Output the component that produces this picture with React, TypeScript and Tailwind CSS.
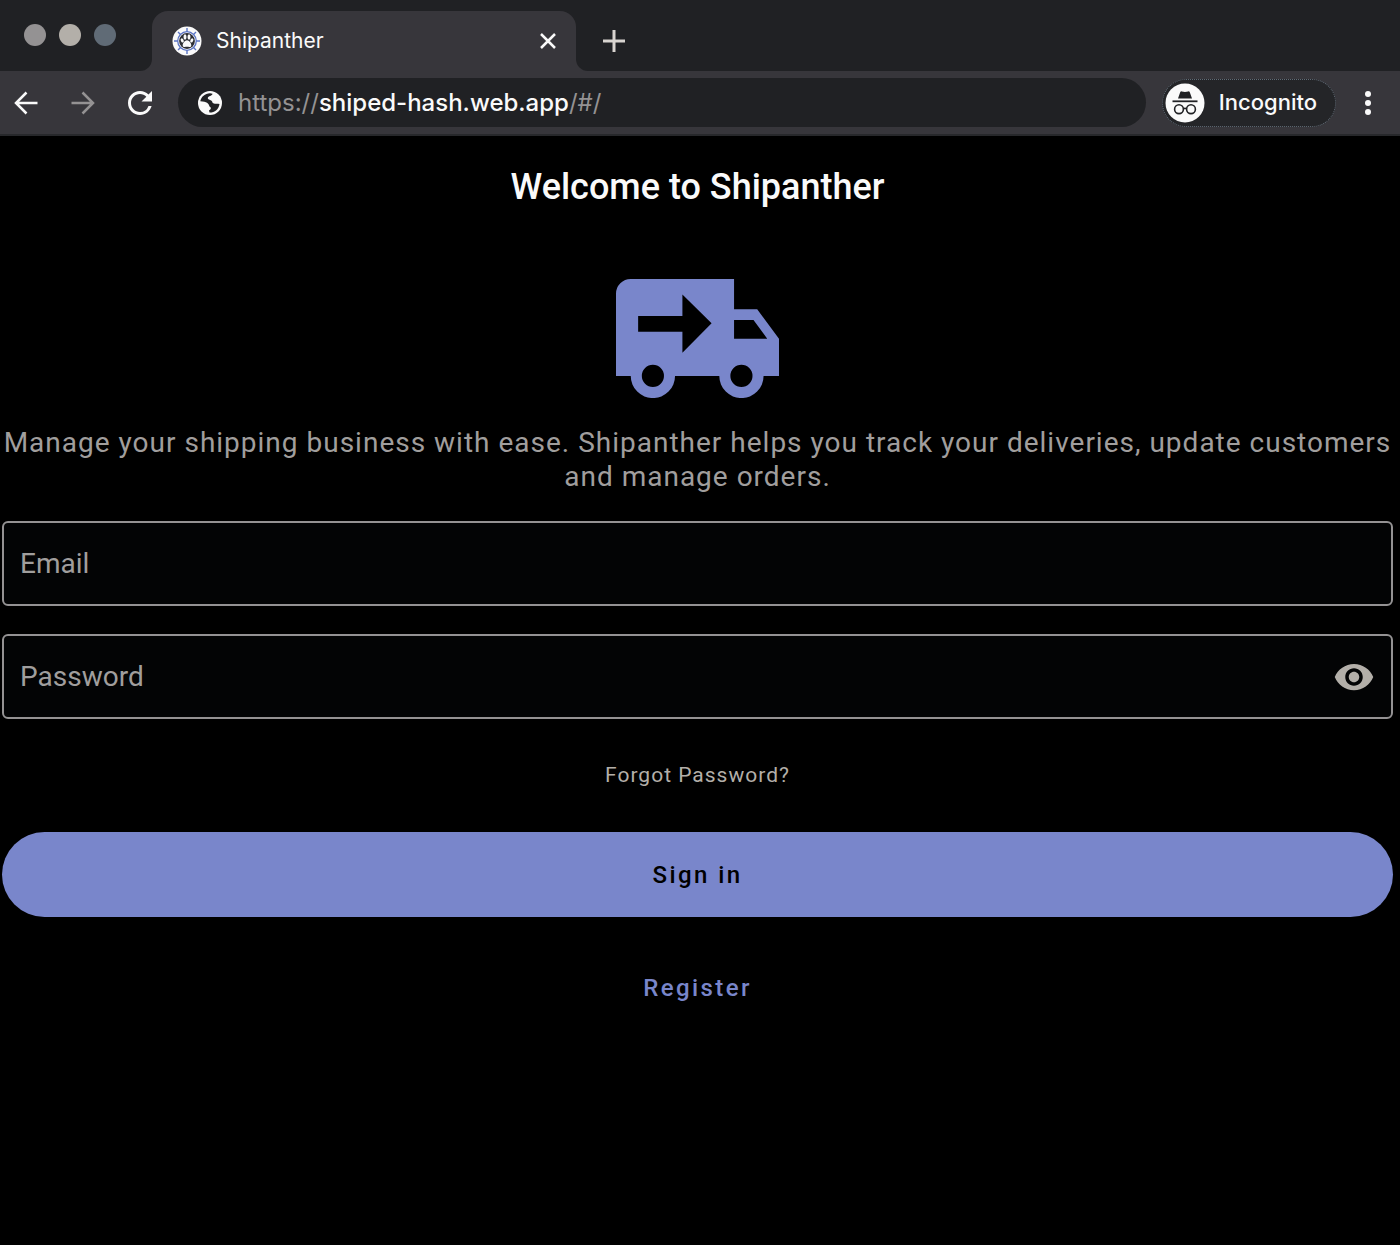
import React, { useState } from "react";
import { MdRefresh, MdVisibility } from "react-icons/md";

function ArrowIcon({ className }: { className: string }) {
  return (
    <svg viewBox="0 0 24 24" className={className} fill="none" stroke="currentColor" strokeWidth="2.5" aria-hidden="true">
      <path d="M23.5 12H2M12.5 1.5 2 12l10.5 10.5" />
    </svg>
  );
}

function GlobeIcon() {
  return (
    <svg viewBox="0 0 24 24" className="size-6" aria-hidden="true">
      <circle cx="12" cy="12" r="12" fill="#fafafa" />
      <path
        d="M2.3 10.3C3 5.8 7 2.3 12 2.2L14.5 2.8C14.5 5 10 5 9.800 7C9.700 9 14 8.500 14.500 11.500C15 13 18 12.500 21.500 13C20.800 18 17 21.500 11.500 21.600L11 19.500C12.500 18.500 14 17 11.500 15.500C10.500 12 9 10.800 2.300 10.300Z"
        fill="#202124"
      />
    </svg>
  );
}

function HelmPawIcon() {
  return (
    <svg viewBox="0 0 30 30" className="size-[30px]" aria-hidden="true">
      <circle cx="15" cy="15" r="14.5" fill="#fafafa" />
      <g stroke="#5b74c4" strokeWidth="1.4">
        <path d="M15 2v4M15 24v4M2 15h4M24 15h4M6 6l3 3M21 21l3 3M6 24l3-3M21 9l3-3" />
      </g>
      <circle cx="15" cy="15" r="9.3" fill="#fafafa" stroke="#5b74c4" strokeWidth="1.3" />
      <circle cx="15" cy="15" r="7.9" fill="#2b2d33" />
      <g fill="#fafafa">
        <ellipse cx="10.2" cy="14.4" rx="1.4" ry="2.2" transform="rotate(-25 10.2 14.4)" />
        <ellipse cx="13" cy="11" rx="1.5" ry="2.7" />
        <ellipse cx="17" cy="11" rx="1.5" ry="2.7" />
        <ellipse cx="19.8" cy="14.4" rx="1.4" ry="2.2" transform="rotate(25 19.8 14.4)" />
        <path d="M15 14.3c-2 0-4.3 3-4.3 4.9 0 2.5 2.7 1.6 4.3 1.6s4.3.9 4.3-1.6c0-1.9-2.3-4.9-4.3-4.9z" />
      </g>
    </svg>
  );
}

function IncognitoIcon() {
  return (
    <svg viewBox="0 0 40 40" className="size-10" aria-hidden="true">
      <circle cx="20" cy="20" r="19.5" fill="#fafafa" />
      <path d="M13 15.5 15.2 9.3Q15.6 8.2 16.8 8.4L20 9 23.2 8.4Q24.4 8.2 24.8 9.3L27 15.5Z" fill="#202124" />
      <path d="M7.5 18.3h25" stroke="#202124" strokeWidth="1.8" />
      <g fill="none" stroke="#202124" strokeWidth="1.6">
        <circle cx="14" cy="26.2" r="4.4" />
        <circle cx="26" cy="26.2" r="4.4" />
        <path d="M18.4 25.8q1.6-1 3.2 0" />
      </g>
    </svg>
  );
}

function TruckIcon() {
  return (
    <svg viewBox="0 0 486 355" className="w-[163px]" role="img" aria-label="Delivery truck">
      <path
        fill="#7986cb"
        fillRule="evenodd"
        d="M44 0H352V90H421L486 178V289H440A66 66 0 0 1 308 289H176A66 66 0 0 1 44 289H0V44A44 44 0 0 1 44 0ZM66 110V157H198V220L285 132 198 46V110ZM352 122V178H451L410 122ZM110 256A33 33 0 1 0 110 322 33 33 0 1 0 110 256ZM374 256A33 33 0 1 0 374 322 33 33 0 1 0 374 256Z"
      />
    </svg>
  );
}

function TabStrip() {
  return (
    <header className="flex h-[71px] items-end bg-[#202124]">
      <div className="flex h-[71px] w-[152px] shrink-0 bg-[#37363b]">
        <div className="flex flex-1 items-center gap-[13px] rounded-br-xl bg-[#202124] pb-[2px] pl-6">
          <span className="size-[22px] rounded-full bg-[#949293]" />
          <span className="size-[22px] rounded-full bg-[#b3afa9]" />
          <span className="size-[22px] rounded-full bg-[#606b76]" />
        </div>
      </div>
      <div className="flex h-[60px] w-[424px] items-center rounded-t-2xl bg-[#37363b] pl-5 pr-4">
        <HelmPawIcon />
        <span className="ml-[14px] flex-1 text-[21px] text-[#fafafa]">Shipanther</span>
        <button type="button" aria-label="Close tab" className="grid size-6 place-items-center text-[#fafafa]">
          <svg viewBox="0 0 16 16" className="size-4" stroke="currentColor" strokeWidth="2.5" aria-hidden="true">
            <path d="M1 1l14 14M15 1 1 15" />
          </svg>
        </button>
      </div>
      <div className="flex h-[71px] flex-1 bg-[#37363b]">
        <div className="flex flex-1 items-center rounded-bl-xl bg-[#202124] pl-[27px] pt-[10px]">
          <button type="button" aria-label="New tab" className="text-[#d8d4d0]">
            <svg viewBox="0 0 22 22" className="size-[22px]" stroke="currentColor" strokeWidth="3" aria-hidden="true">
              <path d="M11 0v22M0 11h22" />
            </svg>
          </button>
        </div>
      </div>
    </header>
  );
}

function Toolbar() {
  return (
    <nav className="flex h-[65px] items-center border-b-2 border-[#27282b] bg-[#37363b] pl-[14px] pr-7">
      <button type="button" aria-label="Back" className="text-[#fafafa]">
        <ArrowIcon className="size-6" />
      </button>
      <button type="button" aria-label="Forward" className="ml-[33px] text-[#949293]">
        <ArrowIcon className="size-6 rotate-180" />
      </button>
      <button type="button" aria-label="Reload" className="ml-[27px] text-[#fafafa]">
        <MdRefresh className="size-9" />
      </button>
      <div className="ml-5 flex h-[49px] flex-1 items-center rounded-full bg-[#202124] pl-5">
        <GlobeIcon />
        <a href="#/" className="ml-4 text-2xl text-[#949293]">
          https://<span className="font-medium text-[#fafafa]">shiped-hash.web.app</span>/#/
        </a>
      </div>
      <button
        type="button"
        className="ml-4 flex h-[48px] items-center gap-[14px] rounded-full border border-dotted border-[#606b76] bg-[#242528] pl-[2px] pr-[18px] text-[22px] font-medium text-[#fafafa]"
      >
        <IncognitoIcon />
        Incognito
      </button>
      <button type="button" aria-label="Browser menu" className="ml-7 flex w-2 flex-col items-center gap-[3px]">
        <span className="size-[6px] rounded-full bg-[#fafafa]" />
        <span className="size-[6px] rounded-full bg-[#fafafa]" />
        <span className="size-[6px] rounded-full bg-[#fafafa]" />
      </button>
    </nav>
  );
}

interface FieldProps {
  id: string;
  label: string;
  type: string;
  children?: React.ReactNode;
}

function Field({ id, label, type, children }: FieldProps) {
  return (
    <div className="relative grid w-full items-center">
      <input
        id={id}
        type={type}
        placeholder=" "
        className="peer col-start-1 row-start-1 h-[85px] w-full rounded-md border-2 border-[#949293] bg-[#030405] px-4 text-[28px] text-[#fafafa] outline-none focus:border-[#7986cb]"
      />
      <label
        htmlFor={id}
        className="invisible col-start-1 row-start-1 ml-[18px] justify-self-start text-[28px] leading-8 text-[#a09e9d] peer-placeholder-shown:visible"
      >
        {label}
      </label>
      {children}
    </div>
  );
}

function SignInForm() {
  const [visible, setVisible] = useState(false);
  return (
    <form className="flex flex-col items-center" onSubmit={(event) => event.preventDefault()}>
      <div className="flex w-full flex-col gap-7">
        <Field id="email" label="Email" type="email" />
        <Field id="password" label="Password" type={visible ? "text" : "password"}>
          <button
            type="button"
            aria-label="Show password"
            onClick={() => setVisible(!visible)}
            className="absolute inset-y-0 right-[18px] text-[#b3afa9]"
          >
            <MdVisibility className="size-[42px]" />
          </button>
        </Field>
      </div>
      <a href="#/forgot" className="mt-[42px] text-[21px] leading-7 tracking-[1px] text-[#b3afa9]">Forgot Password?</a>
      <button type="submit" className="mt-[43px] h-[85px] w-full rounded-full bg-[#7986cb] text-2xl font-medium tracking-widest text-black">
        Sign in
      </button>
      <a href="#/register" className="mt-[55px] text-2xl font-medium tracking-widest text-[#7986cb]">Register</a>
    </form>
  );
}

export default function App() {
  return (
    <div className="flex min-h-screen flex-col bg-black font-['Inter',sans-serif]">
      <TabStrip />
      <Toolbar />
      <main className="flex flex-1 flex-col items-center pl-[2px] pr-[7px] pt-[31px] font-['Roboto',sans-serif]">
        <h1 className="text-4xl font-medium text-[#fafafa]">Welcome to Shipanther</h1>
        <div className="mt-[72px]">
          <TruckIcon />
        </div>
        <p className="mt-7 text-center text-[28px] leading-[34px] tracking-[1px] text-[#a09e9d]">
          Manage your shipping business with ease. Shipanther helps you track your deliveries, update customers and
          manage orders.
        </p>
        <div className="mt-[27px] w-full">
          <SignInForm />
        </div>
      </main>
    </div>
  );
}
